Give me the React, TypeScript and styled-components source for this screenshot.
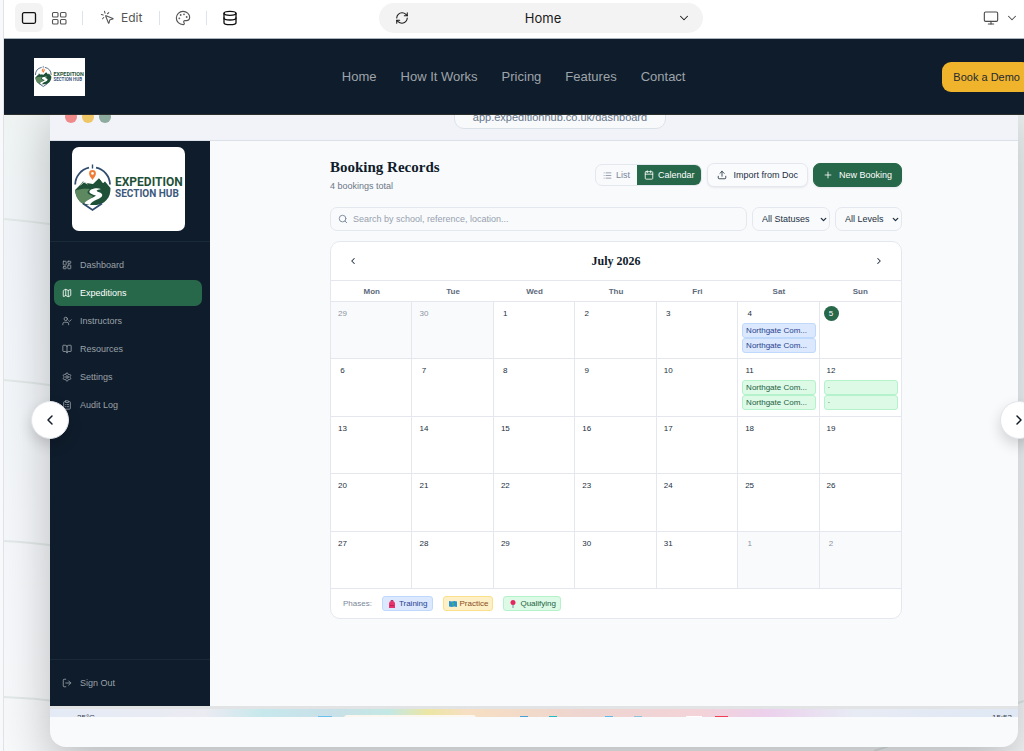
import React from "react";
import styled, { createGlobalStyle } from "styled-components";
import {
  BookOpen,
  Calendar as CalendarIcon,
  ChevronDown,
  ChevronLeft,
  ChevronRight,
  ClipboardList,
  Database,
  LayoutDashboard,
  List,
  LogOut,
  Map,
  Monitor,
  MousePointerClick,
  Palette,
  Plus,
  RefreshCw,
  Search,
  Settings,
  Upload,
  UserCheck,
} from "lucide-react";

const navy = "#0f1c2b";
const green = "#28684a";
const line = "#e4e8ee";
const sans = '"Liberation Sans", Arial, sans-serif';
const serif = '"Liberation Serif", "Times New Roman", serif';

const GlobalStyle = createGlobalStyle`
  *, *::before, *::after { box-sizing: border-box; }
  body { margin: 0; background: #f8f9fb; font-family: ${sans}; overflow: hidden; }
  button, input, select { font: inherit; color: inherit; margin: 0; }
  button { cursor: pointer; border: 0; background: none; padding: 0; }
  h1, h2, p, ul { margin: 0; padding: 0; }
  svg { display: block; flex: none; }
`;

const Frame = styled.div`
  margin-left: 3px;
  border-left: 1px solid #dfe3e8;
  min-height: 100vh;
  display: flex;
  flex-direction: column;
`;

/* Editor toolbar */
const Toolbar = styled.div`
  height: 39px;
  background: #fff;
  border-bottom: 1px solid #a9b3ba;
  display: grid;
  grid-template-columns: 1fr 324px 316px;
  align-items: center;
  padding: 0 5px 3px 11px;
  font-family: Inter, sans-serif;
  color: #4b4b4b;
`;

const ToolGroup = styled.div<{ $end?: boolean }>`
  display: flex;
  align-items: center;
  justify-content: ${(p) => (p.$end ? "flex-end" : "flex-start")};
  gap: ${(p) => (p.$end ? "6px" : "0")};
`;

const ToolButton = styled.button<{ $active?: boolean; $dark?: boolean; $labelled?: boolean }>`
  height: 29px;
  min-width: 28px;
  padding: ${(p) => (p.$labelled ? "0 8px" : "0")};
  border-radius: 6px;
  display: flex;
  align-items: center;
  justify-content: center;
  gap: 6px;
  font-size: 12px;
  background: ${(p) => (p.$active ? "#f3f3f3" : "transparent")};
  color: ${(p) => (p.$active || p.$dark ? "#111" : "#555")};
`;

const Separator = styled.span`
  width: 1px;
  height: 14px;
  margin: 0 9px;
  background: #dde3ea;
`;

const PagePicker = styled.div`
  height: 30px;
  border-radius: 15px;
  background: #f3f3f3;
  display: flex;
  align-items: center;
  justify-content: space-between;
  padding: 0 12px 0 16px;
  font-size: 13px;
  color: #1a1a1a;
`;

/* Site header */
const SiteHeader = styled.header`
  height: 76px;
  background: ${navy};
  border-bottom: 1px solid #2a2f2e;
  display: flex;
  align-items: center;
  justify-content: space-between;
  padding-left: 30px;
  overflow: hidden;
`;

const SiteLogo = styled.a`
  display: block;
  background: #fff;
  width: 51px;
  height: 38px;
`;

const SiteNav = styled.nav`
  display: flex;
  gap: 24px;
`;

const SiteLink = styled.a`
  color: #9ea4aa;
  text-decoration: none;
  white-space: nowrap;
  font-size: 13px;
`;

const DemoButton = styled.button`
  height: 30px;
  padding: 0 11px;
  margin-right: -7px;
  border-radius: 9px;
  background: #efb42b;
  color: #1f2a33;
  font-size: 11px;
  white-space: nowrap;
`;

/* Showcase area */
const Stage = styled.main`
  position: relative;
  flex: 1;
  overflow: hidden;
  padding: 0 6px 4px 46px;
  background: linear-gradient(180deg, #f0f5f4 0, #f1f5f9 20%, #f8f9fb 100%);
`;

const Contours = styled.svg`
  position: absolute;
  inset: 0;
  width: 100%;
  height: 100%;
`;

const Device = styled.section`
  position: relative;
  margin-top: -21px;
  border-radius: 16px;
  overflow: hidden;
  background: #f9fafc;
  box-shadow: 0 20px 50px rgba(0, 0, 0, 0.25);
`;

const Chrome = styled.div`
  height: 47px;
  background: #f2f3f8;
  border-bottom: 1px solid #dce0e8;
  display: grid;
  grid-template-columns: 1fr auto 1fr;
  align-items: center;
  padding: 0 15px 0 15px;
`;

const Lights = styled.div`
  display: flex;
  gap: 5px;
`;

const Light = styled.span<{ $color: string }>`
  width: 12px;
  height: 12px;
  border-radius: 50%;
  background: ${(p) => p.$color};
`;

const Address = styled.div`
  min-width: 212px;
  height: 24px;
  line-height: 22px;
  text-align: center;
  border: 1px solid #dbe2ea;
  border-radius: 10px;
  background: #f8f9fb;
  color: #66758a;
  font-size: 11px;
  margin-left: 52px;
`;

const Screen = styled.div`
  display: flex;
  min-height: 565px;
`;

const Sidebar = styled.aside`
  width: 160px;
  flex: none;
  background: ${navy};
  display: flex;
  flex-direction: column;
`;

const Brand = styled.div`
  height: 101px;
  padding: 6px 22px;
  border-bottom: 1px solid #1a2936;
`;

const BrandCard = styled.div`
  height: 84px;
  width: 113px;
  border-radius: 7px;
  overflow: hidden;
  background: #fff;
`;

const SideNav = styled.nav`
  flex: 1;
  display: flex;
  flex-direction: column;
  gap: 2px;
  padding: 10px 8px 0 4px;
`;

const SideFoot = styled.div`
  height: 47px;
  border-top: 1px solid #1a2936;
  padding: 10px 8px 0 4px;
`;

const SideLink = styled.a<{ $active?: boolean }>`
  height: 26px;
  display: flex;
  align-items: center;
  gap: 8px;
  padding-left: 8px;
  border-radius: 7px;
  font-size: 9px;
  text-decoration: none;
  color: ${(p) => (p.$active ? "#fff" : "#9aa2a9")};
  background: ${(p) => (p.$active ? green : "transparent")};
`;

const Content = styled.div`
  flex: 1;
  min-width: 0;
  padding: 17px 116px 0 120px;
  color: #22303f;
`;

const TitleRow = styled.div`
  display: flex;
  align-items: flex-start;
  justify-content: space-between;
`;

const Title = styled.h1`
  font: bold 15px/18px ${serif};
  color: ${navy};
`;

const Subtitle = styled.p`
  margin-top: 4px;
  font-size: 9px;
  line-height: 12px;
  color: #6b7788;
`;

const Actions = styled.div`
  display: flex;
  align-items: center;
  gap: 5px;
  margin-top: 5px;
`;

const Segmented = styled.div`
  display: flex;
  height: 22px;
  border: 1px solid ${line};
  border-radius: 7px;
  overflow: hidden;
`;

const Segment = styled.button<{ $active?: boolean }>`
  display: flex;
  align-items: center;
  gap: 4px;
  padding: 0 7px;
  font-size: 9px;
  background: ${(p) => (p.$active ? green : "transparent")};
  color: ${(p) => (p.$active ? "#fff" : "#79869a")};
`;

const ActionButton = styled.button<{ $primary?: boolean }>`
  display: flex;
  align-items: center;
  gap: 6px;
  height: 24px;
  padding: 0 9px;
  border-radius: 7px;
  font-size: 9px;
  border: 1px solid ${(p) => (p.$primary ? green : line)};
  background: ${(p) => (p.$primary ? green : "#fafbfd")};
  color: ${(p) => (p.$primary ? "#fff" : "#22303f")};
  box-shadow: 0 1px 2px rgba(15, 28, 43, 0.08);
`;

const Filters = styled.div`
  display: flex;
  gap: 5px;
  margin-top: 15px;
`;

const SearchBox = styled.label`
  flex: 1;
  height: 24px;
  display: flex;
  align-items: center;
  gap: 5px;
  padding: 0 7px;
  border: 1px solid ${line};
  border-radius: 7px;
  color: #8390a2;
`;

const SearchInput = styled.input`
  flex: 1;
  min-width: 0;
  border: 0;
  padding: 0;
  outline: 0;
  background: transparent;
  font-size: 9px;
  &::placeholder { color: #97a1b0; opacity: 1; }
`;

const SelectBox = styled.span<{ $wide?: boolean }>`
  width: ${(p) => (p.$wide ? "78px" : "67px")};
  display: grid;
  align-items: center;
  & > * { grid-area: 1 / 1; }
  & > svg { justify-self: end; margin-right: 2px; pointer-events: none; }
`;

const Select = styled.select`
  appearance: none;
  width: 100%;
  height: 24px;
  padding: 0 0 0 9px;
  border: 1px solid ${line};
  border-radius: 7px;
  background: #f9fafc;
  font-size: 9px;
`;

const CalendarCard = styled.section`
  margin-top: 10px;
  border: 1px solid ${line};
  border-radius: 10px;
  background: #fff;
  overflow: hidden;
`;

const MonthBar = styled.div`
  height: 38px;
  display: flex;
  align-items: center;
  justify-content: space-between;
  padding: 0 14px;
`;

const Month = styled.h2`
  font: bold 12px/16px ${serif};
  color: ${navy};
`;

const MonthButton = styled.button`
  width: 15px;
  height: 20px;
  display: grid;
  place-items: center;
  color: #22303f;
`;

const Grid = styled.table`
  width: 100%;
  height: 309px;
  table-layout: fixed;
  border-collapse: separate;
  border-spacing: 0;
  border-top: 1px solid ${line};
  font-size: 8px;
`;

const DayName = styled.th`
  height: 21px;
  padding: 0;
  color: #5d6a7c;
  border-bottom: 1px solid ${line};
`;

const Day = styled.td<{ $muted?: boolean }>`
  height: 57px;
  padding: 5px 3px 0 4px;
  vertical-align: top;
  border-bottom: 1px solid ${line};
  border-right: 1px solid ${line};
  background: ${(p) => (p.$muted ? "#f9fafc" : "#fff")};
  color: ${(p) => (p.$muted ? "#8a95a4" : "#22303f")};
  &:last-child { border-right: 0; }
`;

const DayNumber = styled.span<{ $today?: boolean }>`
  display: grid;
  place-items: center;
  width: 15px;
  height: 15px;
  margin: -1px 0 2px;
  border-radius: 50%;
  background: ${(p) => (p.$today ? green : "transparent")};
  color: ${(p) => (p.$today ? "#fff" : "inherit")};
`;

type Tone = "blue" | "amber" | "green";
const tones: Record<Tone, { bg: string; edge: string; ink: string }> = {
  blue: { bg: "#dbe8fd", edge: "#bfd9fc", ink: "#29438f" },
  amber: { bg: "#fdf0c6", edge: "#fae08b", ink: "#8a4b1c" },
  green: { bg: "#dcfae6", edge: "#b4f2cb", ink: "#256143" },
};

const Booking = styled.div<{ $tone: Tone }>`
  height: 15px;
  line-height: 13px;
  padding: 0 3px;
  border: 1px solid ${(p) => tones[p.$tone].edge};
  border-radius: 3px;
  background: ${(p) => tones[p.$tone].bg};
  color: ${(p) => tones[p.$tone].ink};
  white-space: nowrap;
  overflow: hidden;
`;

const Legend = styled.div`
  height: 29px;
  display: flex;
  align-items: center;
  gap: 10px;
  padding-left: 12px;
  font-size: 8px;
  color: #7b8797;
`;

const Phase = styled.span<{ $tone: Tone }>`
  display: flex;
  align-items: center;
  gap: 3px;
  height: 15px;
  padding: 0 4px 0 5px;
  border: 1px solid ${(p) => tones[p.$tone].edge};
  border-radius: 3px;
  background: ${(p) => tones[p.$tone].bg};
  color: ${(p) => tones[p.$tone].ink};
`;

/* The top sliver of the desktop taskbar below the app */
const Taskbar = styled.div`
  height: 11px;
  border-top: 3px solid #e2e3e4;
  overflow: hidden;
  display: flex;
  justify-content: space-between;
  padding: 5px 6px 0 27px;
  font-size: 8px;
  line-height: 8px;
  color: #38424d;
  background: linear-gradient(
    90deg,
    #e4ebf6 0,
    #ebebf2 16%,
    #c6e8ec 22%,
    #c9e0e8 29%,
    #c3e8e4 35%,
    #ece6a4 39%,
    #f6dfc2 43%,
    #eed5d0 55%,
    #f3d3d8 67%,
    #ecd0ec 74%,
    #e7ebf4 83%,
    #dfe8f4 100%
  );
`;

const TaskIcons = styled.svg`
  margin-top: -2px;
`;

const DeviceFoot = styled.div`
  height: 30px;
`;

const SlideButton = styled.button<{ $side: "left" | "right" }>`
  position: absolute;
  top: 286px;
  ${(p) => (p.$side === "left" ? "left: 27px;" : "right: -14px;")}
  width: 38px;
  height: 38px;
  border-radius: 50%;
  border: 1px solid #e2e6ea;
  background: #fff;
  color: #111c28;
  display: grid;
  place-items: center;
  box-shadow: 0 6px 14px rgba(0, 0, 0, 0.16);
`;

function Logo({ width, height }: { width: number; height: number }) {
  return (
    <svg width={width} height={height} viewBox="0 0 113 84" role="img" aria-label="Expedition Section Hub">
      <path d="M3.200 37.500a17.500 17.500 0 0 1 13.800-16.800M24 20.700A17.500 17.500 0 0 1 38 37.500" fill="none" stroke="#304d70" strokeWidth="1.800" />
      <path d="M20.500 17.500v4" stroke="#304d70" strokeWidth="1.400" />
      <path d="M20.500 33c-2-3-3.400-4.700-3.400-6.600a3.400 3.400 0 0 1 6.800 0c0 1.900-1.400 3.600-3.400 6.600z" fill="#ef7d35" />
      <circle cx="20.500" cy="26.400" r="1.300" fill="#fff" />
      <path d="M3 43l5-5 3-3.500 3.500 1.500 6.500 1 6-6 4 5 2-1.500 5.500 6.500c0 5-1 9-4 12-3 3.500-7 4.500-10 5H13c-6-3-9-8-10-15z" fill="#1f5138" />
      <path d="M3 43.500c6-2 11-2 15-1.500-4 3-3 5 2 6.500 3 2-4 3-8 8l-1 .5c-5-3-7.500-8-8-13.500z" fill="#5d8860" />
      <path d="M19 42.500c4-1.500 7-1.500 10-.5-5 1-6 2-1 3.500 4 2 2.500 5-3 7-4 1.500-6 3-7 5.500l-6-1.500c4-5 10-5.500 12-8-6-1.500-8.500-3.500-5-6z" fill="#fff" />
      <path d="M8.500 38l3.500-3 3.500 2M22 35l5-4.500 4.500 5.500" fill="none" stroke="#fff" strokeWidth=".8" />
      <path d="M11 56.500l9.500 6.500 9.500-6.500" fill="none" stroke="#304d70" strokeWidth="1.800" />
      <text x="43" y="39" fontFamily="Roboto, sans-serif" fontWeight="700" fontSize="12" fill="#1f5138">
        EXPEDITION
      </text>
      <text x="43" y="50" fontFamily="Roboto, sans-serif" fontWeight="700" fontSize="10" fill="#3c587b">
        SECTION HUB
      </text>
    </svg>
  );
}

const sideItems = [
  { label: "Dashboard", Icon: LayoutDashboard },
  { label: "Expeditions", Icon: Map, active: true },
  { label: "Instructors", Icon: UserCheck },
  { label: "Resources", Icon: BookOpen },
  { label: "Settings", Icon: Settings },
  { label: "Audit Log", Icon: ClipboardList },
];

const dayNames = ["Mon", "Tue", "Wed", "Thu", "Fri", "Sat", "Sun"];

const bookings: Record<number, { tone: Tone; label: string }> = {
  4: { tone: "blue", label: "Northgate Com..." },
  11: { tone: "green", label: "Northgate Com..." },
  12: { tone: "green", label: "·" },
};

/* July 2026 starts on a Wednesday: two days of June lead the grid. */
const weeks = Array.from({ length: 5 }, (_, w) =>
  Array.from({ length: 7 }, (_, d) => {
    const n = w * 7 + d - 1;
    if (n < 1) return { day: n + 30, muted: true };
    if (n > 31) return { day: n - 31, muted: true };
    return { day: n, muted: false };
  })
);

export default function App() {
  return (
    <>
      <GlobalStyle />
      <Frame>
        <Toolbar>
          <ToolGroup>
            <ToolButton $active aria-label="Single page">
              <svg width="16" height="14" viewBox="0 0 16 14" fill="none" stroke="currentColor" strokeWidth="1.300">
                <rect x="1.500" y="1.700" width="13" height="10.600" rx="1.500" />
              </svg>
            </ToolButton>
            <ToolButton aria-label="All pages">
              <svg width="30" height="14" viewBox="-7 0 30 14" fill="none" stroke="currentColor" strokeWidth="1.100">
                <rect x="2.500" y="1.500" width="5.500" height="4.500" rx="1" />
                <rect x="10.500" y="1.500" width="5.500" height="4.500" rx="1" />
                <rect x="2.500" y="8.500" width="5.500" height="4.500" rx="1" />
                <rect x="10.500" y="8.500" width="5.500" height="4.500" rx="1" />
              </svg>
            </ToolButton>
            <Separator />
            <ToolButton $labelled>
              <MousePointerClick size={15} strokeWidth={1.7} />
              Edit
            </ToolButton>
            <Separator />
            <ToolButton aria-label="Theme">
              <Palette size={16} strokeWidth={1.7} />
            </ToolButton>
            <Separator />
            <ToolButton $dark aria-label="Data">
              <Database size={16} strokeWidth={2} />
            </ToolButton>
          </ToolGroup>
          <PagePicker>
            <RefreshCw size={14} strokeWidth={1.8} />
            Home
            <ChevronDown size={14} strokeWidth={1.8} />
          </PagePicker>
          <ToolGroup $end>
            <Monitor size={16} strokeWidth={1.7} />
            <ChevronDown size={14} strokeWidth={1.8} />
          </ToolGroup>
        </Toolbar>

        <SiteHeader>
          <SiteLogo href="#">
            <Logo width={51} height={38} />
          </SiteLogo>
          <SiteNav>
            {["Home", "How It Works", "Pricing", "Features", "Contact"].map((t) => (
              <SiteLink href="#" key={t}>
                {t}
              </SiteLink>
            ))}
          </SiteNav>
          <DemoButton>Book a Demo</DemoButton>
        </SiteHeader>

        <Stage>
          <Contours viewBox="0 0 1020 636" preserveAspectRatio="xMinYMin slice" fill="none" stroke="#e2e9e8" strokeWidth="2">
            <path d="M0 104q25 2 60 7M0 265q25 2 60 7M0 426q25 1 60 6M0 582q30 1 60 5" />
            <path d="M870 636q60-20 150-50" />
          </Contours>
          <Device>
            <Chrome>
              <Lights>
                <Light $color="#f08a8a" />
                <Light $color="#efc666" />
                <Light $color="#8eab9f" />
              </Lights>
              <Address>app.expeditionhub.co.uk/dashboard</Address>
            </Chrome>
            <Screen>
              <Sidebar>
                <Brand>
                  <BrandCard>
                    <Logo width={113} height={84} />
                  </BrandCard>
                </Brand>
                <SideNav>
                  {sideItems.map(({ label, Icon, active }) => (
                    <SideLink href="#" key={label} $active={active}>
                      <Icon size={10} strokeWidth={2} />
                      {label}
                    </SideLink>
                  ))}
                </SideNav>
                <SideFoot>
                  <SideLink href="#">
                    <LogOut size={10} strokeWidth={2} />
                    Sign Out
                  </SideLink>
                </SideFoot>
              </Sidebar>
              <Content>
                <TitleRow>
                  <div>
                    <Title>Booking Records</Title>
                    <Subtitle>4 bookings total</Subtitle>
                  </div>
                  <Actions>
                    <Segmented>
                      <Segment>
                        <List size={9} />
                        List
                      </Segment>
                      <Segment $active>
                        <CalendarIcon size={10} />
                        Calendar
                      </Segment>
                    </Segmented>
                    <ActionButton>
                      <Upload size={10} />
                      Import from Doc
                    </ActionButton>
                    <ActionButton $primary>
                      <Plus size={10} />
                      New Booking
                    </ActionButton>
                  </Actions>
                </TitleRow>
                <Filters>
                  <SearchBox>
                    <Search size={10} strokeWidth={2.4} />
                    <SearchInput type="text" aria-label="Search bookings" placeholder="Search by school, reference, location..." />
                  </SearchBox>
                  <SelectBox $wide>
                    <Select aria-label="Status">
                      <option>All Statuses</option>
                    </Select>
                    <ChevronDown size={9} strokeWidth={3.5} />
                  </SelectBox>
                  <SelectBox>
                    <Select aria-label="Level">
                      <option>All Levels</option>
                    </Select>
                    <ChevronDown size={9} strokeWidth={3.5} />
                  </SelectBox>
                </Filters>
                <CalendarCard>
                  <MonthBar>
                    <MonthButton aria-label="Previous month">
                      <ChevronLeft size={10} strokeWidth={2.5} />
                    </MonthButton>
                    <Month>July 2026</Month>
                    <MonthButton aria-label="Next month">
                      <ChevronRight size={10} strokeWidth={2.5} />
                    </MonthButton>
                  </MonthBar>
                  <Grid>
                    <thead>
                      <tr>
                        {dayNames.map((d) => (
                          <DayName key={d} scope="col">
                            {d}
                          </DayName>
                        ))}
                      </tr>
                    </thead>
                    <tbody>
                      {weeks.map((week, w) => (
                        <tr key={w}>
                          {week.map(({ day, muted }) => {
                            const booking = muted ? undefined : bookings[day];
                            return (
                              <Day key={day} $muted={muted}>
                                <DayNumber $today={day === 5}>{day}</DayNumber>
                                {booking && (
                                  <>
                                    <Booking $tone={booking.tone}>{booking.label}</Booking>
                                    <Booking $tone={booking.tone}>{booking.label}</Booking>
                                  </>
                                )}
                              </Day>
                            );
                          })}
                        </tr>
                      ))}
                    </tbody>
                  </Grid>
                  <Legend>
                    Phases:
                    <Phase $tone="blue">
                      <svg width="8" height="8" viewBox="0 0 8 8">
                        <path d="M1 8V4a3 3 0 0 1 6 0v4z" fill="#e8336d" />
                        <path d="M3 1.500V.5h2v1" fill="none" stroke="#b4335f" />
                        <path d="M2 5.500h4" stroke="#c01f56" />
                      </svg>
                      Training
                    </Phase>
                    <Phase $tone="amber">
                      <svg width="8" height="8" viewBox="0 0 8 8">
                        <path d="M0 1l2.700.5L5.300 1 8 1.500V7l-2.700-.5L2.700 7 0 6.500z" fill="#2a93c9" />
                        <path d="M3 2l2 1v3L3 5z" fill="#42a989" />
                      </svg>
                      Practice
                    </Phase>
                    <Phase $tone="green">
                      <svg width="8" height="8" viewBox="0 0 8 8">
                        <path d="M4 4v4" stroke="#7b8ba0" />
                        <circle cx="4" cy="2.500" r="2.500" fill="#e3265f" />
                      </svg>
                      Qualifying
                    </Phase>
                  </Legend>
                </CalendarCard>
              </Content>
            </Screen>
            <Taskbar>
              <span>25°C</span>
              <TaskIcons width="450" height="6" viewBox="0 0 450 6">
                <rect x="0" y="4" width="14" height="2" fill="#6cc0f0" />
                <rect x="26" y="3" width="132" height="6" rx="3" fill="#fbf7ee" />
                <rect x="202" y="4" width="8" height="2" fill="#4b9fd8" />
                <rect x="231" y="4" width="8" height="2" fill="#1fbcc6" />
                <rect x="287" y="4" width="8" height="2" fill="#5cbbe8" />
                <rect x="316" y="4" width="8" height="2" fill="#8fc2e0" />
                <rect x="368" y="4" width="16" height="2" fill="#fff" />
                <rect x="397" y="4" width="13" height="2" fill="#f13d55" />
              </TaskIcons>
              <span>15:53</span>
            </Taskbar>
            <DeviceFoot />
          </Device>
          <SlideButton $side="left" aria-label="Previous slide">
            <ChevronLeft size={16} strokeWidth={2.2} />
          </SlideButton>
          <SlideButton $side="right" aria-label="Next slide">
            <ChevronRight size={16} strokeWidth={2.2} />
          </SlideButton>
        </Stage>
      </Frame>
    </>
  );
}
